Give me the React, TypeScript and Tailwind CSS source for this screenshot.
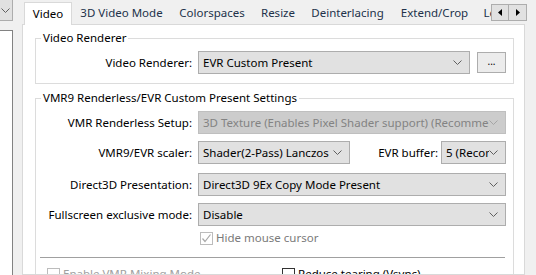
const Chevron = ({ color = "#606060" }: { color?: string }) => (
  <svg width="9" height="5" viewBox="0 0 9 5" className="shrink-0">
    <polyline points="0.5,0.5 4.5,4.5 8.5,0.5" fill="none" stroke={color} strokeWidth="1" />
  </svg>
);

const Combo = ({
  value,
  width,
  disabled = false,
}: {
  value: string;
  width: string;
  disabled?: boolean;
}) => (
  <div
    className={`${width} h-[23px] shrink-0 flex items-center border pl-[4px] pr-[7px] ${
      disabled ? "bg-[#cccccc] border-[#bfbfbf] text-[#838383]" : "bg-[#e1e1e1] border-[#adadad] text-black"
    }`}
  >
    <span className="flex-1 overflow-hidden whitespace-nowrap">{value}</span>
    <Chevron color={disabled ? "#a5a5a5" : "#606060"} />
  </div>
);

const Check = ({ checked = false, disabled = false }: { checked?: boolean; disabled?: boolean }) => (
  <span
    className={`w-[13px] h-[13px] shrink-0 border bg-white flex items-center justify-center ${
      disabled ? "border-[#bcbcbc]" : "border-[#333333]"
    }`}
  >
    {checked && (
      <svg width="11" height="11" viewBox="0 0 11 11">
        <polyline points="1.5,5.5 4,8.5 9.5,1.5" fill="none" stroke={disabled ? "#a8a8a8" : "#333"} strokeWidth="1.2" />
      </svg>
    )}
  </span>
);

const Row = ({ label, children, top }: { label: string; children: React.ReactNode; top: string }) => (
  <div className={`flex items-center ${top}`}>
    <div className="w-[156px] shrink-0 text-right whitespace-nowrap">{label}</div>
    <div className="ml-[6px] flex items-center">{children}</div>
  </div>
);

const tabs = [
  { name: "Video", w: "w-[48px]" },
  { name: "3D Video Mode", w: "w-[99px]" },
  { name: "Colorspaces", w: "w-[82px]" },
  { name: "Resize", w: "w-[50px]" },
  { name: "Deinterlacing", w: "w-[89px]" },
  { name: "Extend/Crop", w: "w-[85px]" },
  { name: "Logo", w: "w-[40px]" },
];

export default function App() {
  return (
    <div className="relative w-[536px] h-[275px] overflow-hidden bg-[#f0f0f0] flex font-['Noto_Sans',sans-serif] text-[11.5px] leading-[16px] text-black">
      {/* left list remnant */}
      <div className="w-[13px] shrink-0 flex flex-col">
        <div className="h-[21px] shrink-0 bg-[#e1e1e1] border-r border-b border-[#adadad] flex items-center pl-[1px]">
          <Chevron />
        </div>
        <div className="mt-[9px] flex-1 bg-white border-t border-r border-[#828282]" />
      </div>

      {/* tab control */}
      <div className="ml-[9px] w-[503px] shrink-0 flex flex-col">
        <div className="h-[24px] shrink-0 flex items-end pl-[2px]">
          {tabs.map((t, i) =>
            i === 0 ? (
              <div
                key={t.name}
                className={`${t.w} h-[23px] shrink-0 bg-white border-l border-t border-r border-[#d9d9d9] flex items-center justify-center relative z-10 -mb-[1px]`}
              >
                {t.name}
              </div>
            ) : (
              <div
                key={t.name}
                className={`${t.w} h-[22px] shrink-0 flex items-center justify-center text-[#22324a] whitespace-nowrap`}
              >
                {t.name}
              </div>
            )
          )}
        </div>

        <div className="flex-1 min-h-0 overflow-hidden bg-white border border-[#d9d9d9] pt-[5px]">
          <fieldset className="ml-[12px] w-[479px] border border-[#dcdcdc] pb-[9px]">
            <legend className="ml-[5px] px-[2px]">Video Renderer</legend>
            <Row label="Video Renderer:" top="mt-[5px]">
              <Combo value="EVR Custom Present" width="w-[272px]" />
              <div className="ml-[7px] w-[29px] h-[21px] bg-[#ececec] border border-[#adadad] flex items-center justify-center text-[10px] leading-none pb-[3px]">
                ...
              </div>
            </Row>
          </fieldset>

          <fieldset className="mt-[6px] ml-[12px] w-[479px] border border-[#dcdcdc] pb-[20px]">
            <legend className="ml-[5px] px-[2px]">VMR9 Renderless/EVR Custom Present Settings</legend>
            <Row label="VMR Renderless Setup:" top="mt-[5px]">
              <Combo value="3D Texture (Enables Pixel Shader support) (Recommended)" width="w-[308px]" disabled />
            </Row>
            <Row label="VMR9/EVR scaler:" top="mt-[7px]">
              <Combo value="Shader(2-Pass) Lanczos" width="w-[152px]" />
              <div className="w-[88px] text-right whitespace-nowrap">EVR buffer:</div>
              <div className="ml-[3px]">
                <Combo value="5 (Recommended)" width="w-[65px]" />
              </div>
            </Row>
            <Row label="Direct3D Presentation:" top="mt-[9px]">
              <Combo value="Direct3D 9Ex Copy Mode Present" width="w-[308px]" />
            </Row>
            <Row label="Fullscreen exclusive mode:" top="mt-[7px]">
              <Combo value="Disable" width="w-[308px]" />
            </Row>
            <div className="mt-[4px] ml-[164px] flex items-center gap-[3px] text-[#7a7a7a]">
              <Check checked disabled />
              <span>Hide mouse cursor</span>
            </div>
            <div className="mt-[11px] ml-[4px] w-[465px] h-px bg-[#a0a0a0]" />
            <div className="mt-[8px] flex items-center">
              <div className="ml-[11px] w-[235px] flex items-center gap-[3px] text-[#a0a0a0]">
                <Check disabled />
                <span>Enable VMR Mixing Mode</span>
              </div>
              <div className="flex items-center gap-[3px]">
                <Check />
                <span>Reduce tearing (Vsync)</span>
              </div>
            </div>
          </fieldset>
        </div>
      </div>

      {/* tab scroll arrows */}
      <div className="absolute left-[491px] top-[4px] flex">
        <div className="w-[18px] h-[17px] bg-[#e1e1e1] border border-[#adadad] flex items-center justify-center">
          <svg width="4" height="7" viewBox="0 0 4 7">
            <polygon points="4,0 0,3.5 4,7" fill="#000" />
          </svg>
        </div>
        <div className="w-[18px] h-[17px] bg-[#e1e1e1] border border-l-0 border-[#adadad] flex items-center justify-center">
          <svg width="4" height="7" viewBox="0 0 4 7">
            <polygon points="0,0 4,3.5 0,7" fill="#000" />
          </svg>
        </div>
      </div>
    </div>
  );
}
